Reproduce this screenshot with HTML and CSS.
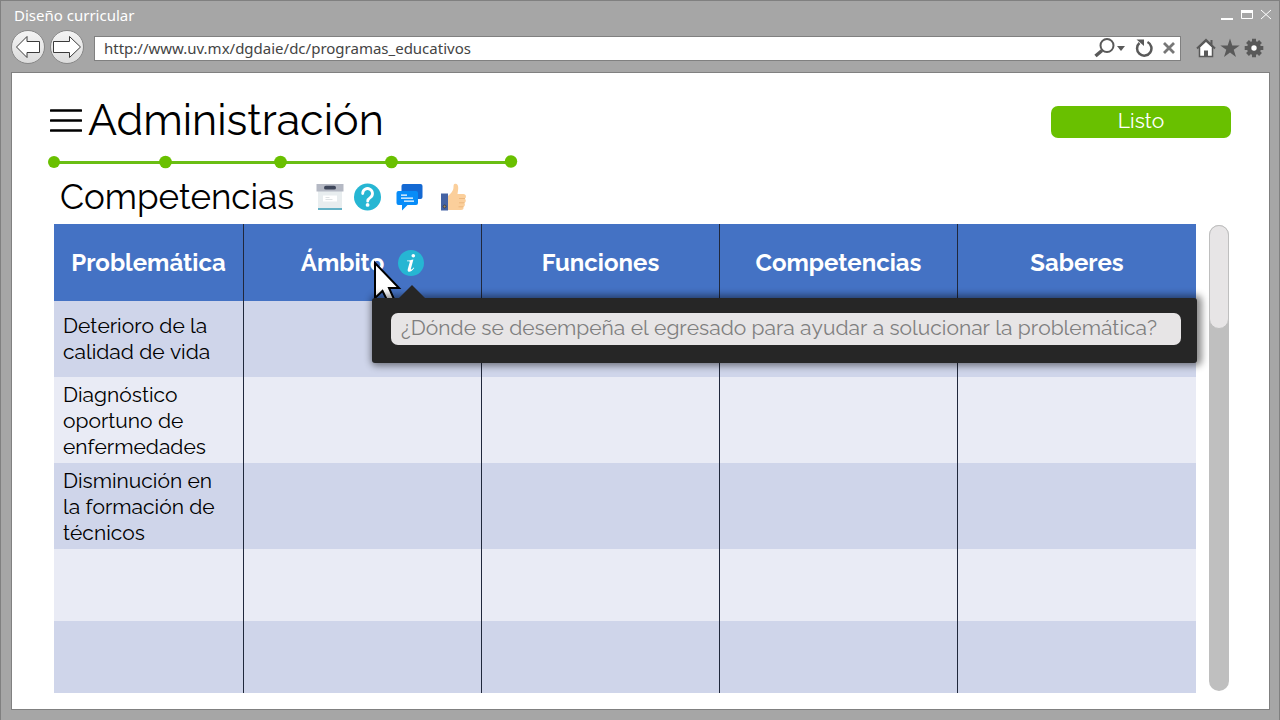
FILE: index.html
```html
<!DOCTYPE html>
<html lang="es">
<head>
<meta charset="utf-8">
<meta name="viewport" content="width=device-width, initial-scale=1">
<title>Diseño curricular</title>
<link rel="stylesheet" href="styles.css">
</head>
<body class="window">
<header class="titlebar">
  <span class="window-title">Diseño curricular</span>
  <div class="window-controls">
    <button class="icon-button" aria-label="Minimizar"><svg width="13" height="12" viewBox="0 0 13 12"><path d="M1 9h12v2H1z" fill="#fff"/></svg></button>
    <button class="icon-button" aria-label="Maximizar"><svg width="13" height="12" viewBox="0 0 13 12"><path d="M1.500 1.500h11v8h-11z" fill="none" stroke="#fff"/><path d="M1 1h12v3H1z" fill="#fff"/></svg></button>
    <button class="icon-button" aria-label="Cerrar"><svg width="12" height="12" viewBox="0 0 12 12"><path d="M1 1l10 9M11 1L1 10" stroke="#fff" fill="none"/></svg></button>
  </div>
</header>
<nav class="toolbar">
  <button class="round-button" aria-label="Atrás"><svg width="26" height="24" viewBox="0 0 26 24"><path d="M1.500 12L12 1.500V6.500H24.500V17.500H12V22.500Z" fill="#fff" stroke="#3a3a3a"/></svg></button>
  <button class="round-button" aria-label="Adelante"><svg width="30" height="24" viewBox="0 0 30 24"><path d="M28.500 12L17.500 1.500V6.500H1.500V17.500H17.500V22.500Z" fill="#fff" stroke="#3a3a3a"/></svg></button>
  <div class="address">
    <input class="address-input" type="text" aria-label="Dirección" value="http://www.uv.mx/dgdaie/dc/programas_educativos">
    <button class="icon-button" aria-label="Buscar"><svg width="32" height="20" viewBox="0 0 32 20"><circle cx="14" cy="7.500" r="6.500" fill="none" stroke="#595959" stroke-width="2"/><path d="M9 12.500L2.500 18" stroke="#595959" stroke-width="3.500"/><path d="M24 8h8l-4 5z" fill="#595959"/></svg></button>
    <button class="icon-button" aria-label="Recargar"><svg width="18" height="20" viewBox="0 0 18 20"><path d="M12.500 4A7.200 7.200 0 1 1 4.500 5" fill="none" stroke="#595959" stroke-width="2.500"/><path d="M1.500 1.500H9V8z" fill="#595959"/></svg></button>
    <button class="icon-button" aria-label="Detener"><svg width="12" height="20" viewBox="0 0 12 20"><path d="M1 5l10 10M11 5L1 15" stroke="#777" stroke-width="2.800"/></svg></button>
  </div>
  <div class="tools">
    <button class="icon-button" aria-label="Inicio"><svg width="20" height="20" viewBox="0 0 20 20"><path d="M3.500 9V18.500H16.500V9L10 3Z" fill="#fff" stroke="#595959" stroke-width="1.500"/><path d="M1 10.500L10 1.800L19 10.500M15.500 2v5" fill="none" stroke="#595959" stroke-width="2"/><path d="M8 12.500h4V19H8z" fill="#595959"/></svg></button>
    <button class="icon-button" aria-label="Favoritos"><svg width="20" height="20" viewBox="0 0 20 20"><path d="M10 .5L12.300 7.500H19.700L13.700 11.800L16 19L10 14.600L4 19L6.300 11.800L.3 7.500H7.700Z" fill="#595959"/></svg></button>
    <button class="icon-button" aria-label="Configuración"><svg width="20" height="20" viewBox="0 0 20 20"><circle cx="10" cy="10" r="7" fill="#595959"/><g stroke="#595959" stroke-width="4"><path d="M10 .7v18.600M.7 10h18.600"/><path d="M3.500 3.500l13 13M16.500 3.500l-13 13"/></g><circle cx="10" cy="10" r="2.700" fill="#fff"/></svg></button>
  </div>
</nav>
<main class="page">
  <div class="page-head">
    <button class="icon-button menu" aria-label="Menú"><svg width="32" height="24" viewBox="0 0 32 24"><path d="M1 1.500h30M1 11.500h30M1 21.500h30" stroke="#000" stroke-width="2.600" stroke-linecap="round"/></svg></button>
    <h1 class="title">Administración</h1>
    <button class="done">Listo</button>
  </div>
  <svg class="progress" width="470" height="14" viewBox="0 0 470 14" role="img" aria-label="Progreso"><path d="M6 7.500H463" stroke="#6abe14" stroke-width="3"/><g fill="#69c000"><circle cx="6" cy="7" r="6"/><circle cx="117.500" cy="7" r="6.300"/><circle cx="232.500" cy="7" r="6.300"/><circle cx="343.500" cy="7" r="6.300"/><circle cx="463" cy="6.500" r="6.200"/></g></svg>
  <div class="section-head">
    <h2 class="subtitle">Competencias</h2>
    <div class="actions">
      <button class="icon-button" aria-label="Archivo"><svg width="28" height="28" viewBox="0 0 28 28"><path d="M2 6h24v21H2z" fill="#e8edef"/><path d="M2 25h24v2H2z" fill="#64b1c6"/><path d="M.5 1h27v7.500H.5z" fill="#b5b9c4"/><rect x="8" y="2.800" width="12" height="3.800" rx="1.900" fill="#3e465a"/><path d="M7 12.500h14v6H7z" fill="#fff"/><path d="M9.500 14.500h4M9.500 16.500h7" stroke="#d7dadd" stroke-width=".8"/></svg></button>
      <button class="icon-button" aria-label="Ayuda"><svg width="28" height="28" viewBox="0 0 28 28"><circle cx="13.500" cy="14" r="13.500" fill="#26b6d3"/><path d="M8.700 10.500a4.900 4.900 0 1 1 7.500 4.100c-2 1.200-2.500 1.700-2.500 3.600" fill="none" stroke="#fff" stroke-width="2.800" stroke-linecap="round"/><circle cx="13.600" cy="21.900" r="1.900" fill="#fff"/></svg></button>
      <button class="icon-button chat" aria-label="Comentarios"><svg width="28" height="28" viewBox="0 0 28 28"><path d="M7.500 1h17a2 2 0 0 1 2 2v11a2 2 0 0 1-2 2H7.500a2 2 0 0 1-2-2V3a2 2 0 0 1 2-2z" fill="#1469d3"/><path d="M2.500 8h17.500a2 2 0 0 1 2 2v10a2 2 0 0 1-2 2H11.500L6 27.500V22H2.500a2 2 0 0 1-2-2V10a2 2 0 0 1 2-2z" fill="#078cf8"/><path d="M5 12.200h6M5 15.200h12M8 18.200h10" stroke="#fff" stroke-width="1.300"/></svg></button>
      <button class="icon-button like" aria-label="Me gusta"><svg width="28" height="28" viewBox="0 0 28 28"><path d="M8 13C11 10 13.500 8 13.500 4C13.500 1.500 14 .5 15.500.7C19 1 18.500 5.500 17.500 11H23.500C26.500 11 26.500 15 24.800 15.700C26.500 17 26 19.300 24.300 20C25.500 21.300 25 23.500 23.300 24C24 26 23 27 21 27H8Z" fill="#fbcf9b"/><path d="M19 15.500h6M19 19.800h5.500M18.500 23.800h5" stroke="#edb77e" stroke-width="1"/><path d="M1 10.500h7V27.500H1z" fill="#4563a4"/><circle cx="4.600" cy="23.500" r="1.500" fill="#a78758" stroke="#333f58"/></svg></button>
    </div>
  </div>
  <div class="content">
    <table class="grid">
      <colgroup><col class="col-first"><col><col><col><col></colgroup>
      <thead>
        <tr>
          <th>Problemática</th>
          <th class="scope">
            <span class="scope-label">Ámbito
              <svg width="26" height="28" viewBox="0 0 26 28" role="img" aria-label="Información"><circle cx="13" cy="14" r="13" fill="#26b6d3"/><circle cx="15.300" cy="6.800" r="1.800" fill="#fff"/><path d="M9 11.600C11 11.500 13.500 11 15.400 10.500L12.900 19.700C12.600 21.200 13.600 20.700 15.700 18.500L16.300 19.100C14 22.200 12.200 23 10.900 22.800C9.500 22.500 9.500 21.300 9.800 20L11.700 13.300C12 12.400 11.500 12.200 9 12.300Z" fill="#fff"/></svg>
            </span>
            <svg class="cursor" width="32" height="44" viewBox="0 0 32 44" aria-hidden="true"><path d="M3 3V38L10.500 31L16 42L22 39L17 28H27Z" fill="#fff" stroke="#000" stroke-width="2"/></svg>
            <div class="tooltip"><input class="tooltip-input" type="text" aria-label="Ámbito" placeholder="¿Dónde se desempeña el egresado para ayudar a solucionar la problemática?"></div>
          </th>
          <th>Funciones</th>
          <th>Competencias</th>
          <th>Saberes</th>
        </tr>
      </thead>
      <tbody>
        <tr class="row-two"><td>Deterioro de la calidad de vida</td><td></td><td></td><td></td><td></td></tr>
        <tr class="row-three"><td>Diagnóstico oportuno de enfermedades</td><td></td><td></td><td></td><td></td></tr>
        <tr class="row-three"><td>Disminución en la formación de técnicos</td><td></td><td></td><td></td><td></td></tr>
        <tr class="row-empty"><td></td><td></td><td></td><td></td><td></td></tr>
        <tr class="row-empty"><td></td><td></td><td></td><td></td><td></td></tr>
      </tbody>
    </table>
    <div class="scroll-track"><div class="scroll-thumb"></div></div>
  </div>
</main>
</body>
</html>
```
FILE: styles.css
```css
* { box-sizing: border-box; }

.window {
  display: flex;
  flex-direction: column;
  min-height: 100vh;
  margin: 0;
  padding: 0 9px 10px 10px;
  background: #a6a6a6;
  border: 1px solid #808080;
  border-bottom: 0;
  font-family: "Raleway", "Lato", sans-serif;
  color: #000;
}

button { font: inherit; cursor: pointer; }

.icon-button {
  display: block;
  padding: 0;
  border: 0;
  background: none;
}

.icon-button svg, .round-button svg { display: block; }

.titlebar {
  display: flex;
  justify-content: space-between;
  align-items: center;
  height: 28px;
  padding: 0 0 0 3px;
  color: #fff;
  font: 15px/28px "Segoe UI", "Noto Sans", sans-serif;
}

.window-controls { display: flex; gap: 7px; margin-right: -2px; }

.toolbar {
  display: flex;
  align-items: center;
  gap: 5px;
  height: 36px;
  margin-bottom: 7px;
}

.round-button {
  display: flex;
  align-items: center;
  justify-content: center;
  width: 34px;
  height: 34px;
  padding: 0;
  border: 1px solid #888;
  border-radius: 50%;
  background: linear-gradient(#f4f4f4, #dcdcdc);
}

.address {
  flex: 1;
  display: flex;
  align-items: center;
  gap: 10px;
  height: 25px;
  margin: 2px 10px 0 5px;
  padding: 0 5px 0 9px;
  background: #fff;
  border: 1px solid #808080;
}

.address-input {
  flex: 1;
  min-width: 0;
  padding: 0;
  border: 0;
  background: none;
  color: #444;
  font: 15px/23px "Segoe UI", "Noto Sans", sans-serif;
}

.tools { display: flex; gap: 4px; margin: 2px 6px 0 0; }

.page {
  flex: 1;
  padding: 24px 38px 15px;
  background: #fff;
  border: 1px solid #808080;
}

.page-head { display: flex; align-items: center; height: 48px; }

.menu { margin-right: 6px; }

.title { flex: 1; margin: 0; font-size: 43px; font-weight: 400; line-height: 46px; padding-bottom: 2px; }

.done {
  width: 180px;
  height: 32px;
  margin-top: 2px;
  padding: 0 0 2px;
  border: 0;
  border-radius: 7px;
  background: #69c000;
  color: #fff;
  font-size: 21px;
  line-height: 28px;
}

.progress { display: block; margin: 10px 0 0 -2px; }

.section-head {
  display: flex;
  align-items: center;
  gap: 22px;
  height: 54px;
  padding: 2px 0 0 10px;
}

.subtitle { margin: 0; font-size: 35px; font-weight: 400; line-height: 48px; }

.actions { display: flex; gap: 10px; }

.chat { margin-left: 4px; }

.like { margin-left: 6px; }

.content { display: flex; gap: 13px; padding: 1px 2px 0 4px; }

.grid {
  flex: 1;
  width: 100%;
  min-width: 0;
  border-collapse: separate;
  border-spacing: 0;
  table-layout: fixed;
}

.col-first { width: 190px; }

.grid th, .grid td { border-right: 1px solid #20283c; }

.grid th:last-child, .grid td:last-child { border-right: 0; }

.grid th {
  height: 77px;
  padding: 0;
  background: #4472c4;
  color: #fff;
  font-size: 24px;
  font-weight: 700;
  line-height: 28px;
}

.grid td {
  padding: 0 9px;
  font-size: 21px;
  line-height: 26px;
  font-kerning: none;
}

.grid tbody tr:nth-child(odd) { background: #cfd5ea; }
.grid tbody tr:nth-child(even) { background: #e9ebf5; }

.row-two { height: 76px; }
.row-three { height: 86px; }
.row-empty { height: 72px; }

.row-three td { padding-top: 2px; }

.scope { position: relative; }

.scope-label { display: flex; align-items: center; justify-content: center; gap: 14px; }

.cursor { position: absolute; top: 36px; left: 128px; }

.tooltip {
  position: absolute;
  z-index: 2;
  top: 74px;
  left: 128px;
  width: 825px;
  padding: 15px 16px 18px 19px;
  background: #262626;
  border-radius: 3px;
  box-shadow: 2px 0 7px 3px rgba(0, 0, 0, .45);
}

.tooltip::before {
  content: "";
  position: absolute;
  top: -13px;
  left: 27px;
  border: 13px solid transparent;
  border-top: 0;
  border-bottom-color: #262626;
}

.tooltip-input {
  display: block;
  width: 100%;
  height: 32px;
  padding: 0 10px 4px;
  border: 0;
  border-radius: 7px;
  background: #e7e5e6;
  font-family: inherit;
  font-size: 21px;
  font-weight: 400;
  font-kerning: none;
}

.tooltip-input::placeholder { color: #7f7f7f; opacity: 1; }

.scroll-track {
  flex: none;
  width: 20px;
  margin: 1px 0 2px;
  border-radius: 10px;
  background: #bfbfbf;
}

.scroll-thumb {
  height: 104px;
  border: 1px solid #bfbfbf;
  border-radius: 10px;
  background: #e7e5e6;
}
```
